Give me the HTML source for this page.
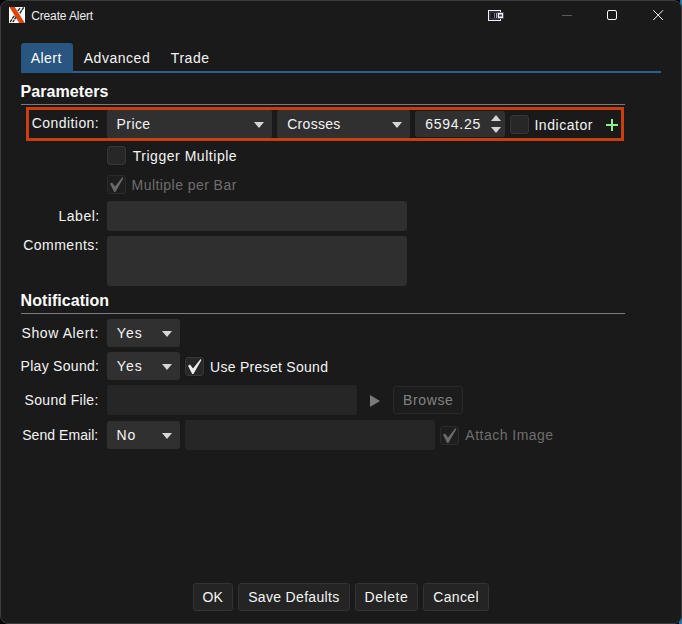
<!DOCTYPE html>
<html><head><meta charset="utf-8"><style>
html,body{margin:0;padding:0;width:682px;height:624px;overflow:hidden;background:#000;}
.b{position:absolute;box-sizing:content-box}
.t{position:absolute;white-space:nowrap;font-family:"Liberation Sans",sans-serif;line-height:1}
</style></head><body>
<div class="b" style="left:680px;top:0;width:2px;height:8px;background:#1677b3"></div><div class="b" style="left:679px;top:617px;width:3px;height:7px;background:#1677b3"></div><div class="b" style="left:0;top:0;width:680px;height:622px;background:#1a1a1a;border:1px solid #3c3c3c;border-radius:8px"></div><svg class="b" style="left:9px;top:7px" width="16" height="16" viewBox="0 0 16 16">
<rect x="0" y="0" width="16" height="16" fill="#ffffff"/>
<polygon points="0.4,0 5.8,0 15.8,16 10.2,16" fill="#e0440e"/>
<g stroke="#262626" stroke-width="1.4" stroke-linecap="butt">
<line x1="9.0" y1="4.0" x2="10.9" y2="1.0"/>
<line x1="10.9" y1="6.3" x2="12.7" y2="3.4"/><line x1="12.9" y1="3.0" x2="14.8" y2="0.4"/>
<line x1="1.1" y1="15.2" x2="2.9" y2="12.3"/><line x1="3.2" y1="11.7" x2="5.3" y2="8.8"/>
<line x1="3.8" y1="15.2" x2="5.3" y2="12.8"/><line x1="5.6" y1="12.3" x2="7.0" y2="10.2"/>
</g></svg><svg class="b" style="left:480px;top:0" width="202" height="32" viewBox="480 0 202 32">
<rect x="488.5" y="10.5" width="12" height="10" fill="none" stroke="#f2f2f2" stroke-width="1"/>
<rect x="490" y="12" width="9" height="7" fill="#181820" stroke="#505068" stroke-width="0.8"/>
<rect x="494" y="13" width="1" height="5" fill="#777"/><rect x="496" y="13" width="1" height="5" fill="#aaa"/>
<rect x="497.5" y="12.5" width="6" height="6" fill="#f2f2f2" stroke="#404050" stroke-width="0.8"/>
<rect x="499" y="14.5" width="3" height="2" fill="#404058"/>
<line x1="562" y1="15.5" x2="572" y2="15.5" stroke="#5a5a5a" stroke-width="1"/>
<rect x="607.5" y="10.5" width="9" height="9" rx="1.5" fill="none" stroke="#ffffff" stroke-width="1"/>
<path d="M653.3 10.3 L663 20 M663 10.3 L653.3 20" stroke="#ffffff" stroke-width="1"/>
</svg><div class="b" style="left:21px;top:71px;width:640px;height:2px;background:#2b6094;"></div><div class="b" style="left:21px;top:43px;width:52px;height:30px;background:#285680;border-radius:3px 3px 0 0"></div><div class="b" style="left:21px;top:104px;width:604px;height:1px;background:#7a7a7a;"></div><div class="b" style="left:21px;top:313px;width:604px;height:1px;background:#7a7a7a;"></div><div class="b" style="left:26px;top:107px;width:592px;height:28px;border:3px solid #cc3f0c"></div><div class="b" style="left:107px;top:110px;width:165px;height:28px;background:#303030;border-radius:2px"></div><div class="b" style="left:277px;top:110px;width:133px;height:28px;background:#303030;border-radius:2px"></div><div class="b" style="left:415px;top:111px;width:90px;height:26px;background:#303030;border-radius:3px"></div><svg class="b" style="left:254px;top:122px" width="10" height="6"><polygon points="0,0 10,0 5.0,6" fill="#d6d6d6"/></svg><svg class="b" style="left:392px;top:122px" width="10" height="6"><polygon points="0,0 10,0 5.0,6" fill="#d6d6d6"/></svg><svg class="b" style="left:491px;top:115px" width="10" height="6"><polygon points="0,6 10,6 5.0,0" fill="#d6d6d6"/></svg><svg class="b" style="left:491px;top:127px" width="10" height="6"><polygon points="0,0 10,0 5.0,6" fill="#d6d6d6"/></svg><div class="b" style="left:510px;top:115px;width:17px;height:17px;background:#272727;border:1px solid #383838;border-radius:3px;box-shadow:0 0 0 1px #171717"></div><div class="b" style="left:107px;top:146px;width:17px;height:17px;background:#272727;border:1px solid #383838;border-radius:3px;box-shadow:0 0 0 1px #171717"></div><div class="b" style="left:107px;top:175px;width:17px;height:17px;background:#1e1e1e;border:1px solid #2b2b2b;border-radius:3px"></div><svg class="b" style="left:107px;top:175px" width="19" height="19" viewBox="0 0 19 19"><polygon points="3.0,8.8 5.0,7.6 8.0,11.4 15.6,2.0 16.3,3.3 8.4,17.0 7.2,17.0" fill="#6a6a6a"/></svg><div class="b" style="left:185px;top:357px;width:17px;height:17px;background:#272727;border:1px solid #383838;border-radius:3px;box-shadow:0 0 0 1px #171717"></div><svg class="b" style="left:185px;top:357px" width="19" height="19" viewBox="0 0 19 19"><polygon points="3.0,8.8 5.0,7.6 8.0,11.4 15.6,2.0 16.3,3.3 8.4,17.0 7.2,17.0" fill="#eeeeee"/></svg><div class="b" style="left:440px;top:426px;width:17px;height:17px;background:#1e1e1e;border:1px solid #2b2b2b;border-radius:3px"></div><svg class="b" style="left:440px;top:426px" width="19" height="19" viewBox="0 0 19 19"><polygon points="3.0,8.8 5.0,7.6 8.0,11.4 15.6,2.0 16.3,3.3 8.4,17.0 7.2,17.0" fill="#6a6a6a"/></svg><div class="b" style="left:606px;top:124px;width:12px;height:2px;background:#90ee90;"></div><div class="b" style="left:611px;top:119px;width:2px;height:12px;background:#90ee90;"></div><div class="b" style="left:107px;top:201px;width:300px;height:30px;background:#2f2f2f;border-radius:3px"></div><div class="b" style="left:107px;top:236px;width:300px;height:50px;background:#2f2f2f;border-radius:3px"></div><div class="b" style="left:107px;top:319px;width:73px;height:28px;background:#303030;border-radius:3px"></div><svg class="b" style="left:162px;top:331px" width="10" height="6"><polygon points="0,0 10,0 5.0,6" fill="#d6d6d6"/></svg><div class="b" style="left:107px;top:352px;width:73px;height:28px;background:#303030;border-radius:3px"></div><svg class="b" style="left:162px;top:364px" width="10" height="6"><polygon points="0,0 10,0 5.0,6" fill="#d6d6d6"/></svg><div class="b" style="left:107px;top:385px;width:250px;height:30px;background:#262626;border-radius:3px"></div><svg class="b" style="left:370px;top:395px" width="10" height="12"><polygon points="0,0 10,6 0,12" fill="#7a7a7a"/></svg><div class="b" style="left:393px;top:386px;width:68px;height:26px;background:#1c1c1c;border:1px solid #292929;border-radius:3px"></div><div class="b" style="left:107px;top:421px;width:73px;height:28px;background:#303030;border-radius:3px"></div><svg class="b" style="left:162px;top:433px" width="10" height="6"><polygon points="0,0 10,0 5.0,6" fill="#d6d6d6"/></svg><div class="b" style="left:185px;top:420px;width:250px;height:30px;background:#262626;border-radius:3px"></div><div class="b" style="left:193px;top:583px;width:38px;height:26px;background:#242424;border:1px solid #333333;border-radius:3px"></div><div class="b" style="left:238px;top:583px;width:110px;height:26px;background:#242424;border:1px solid #333333;border-radius:3px"></div><div class="b" style="left:355px;top:583px;width:61px;height:26px;background:#242424;border:1px solid #333333;border-radius:3px"></div><div class="b" style="left:423px;top:583px;width:64px;height:26px;background:#242424;border:1px solid #333333;border-radius:3px"></div>
<div class="t" id="title" style="left:31.16px;top:10.04px;font-size:12px;font-weight:400;letter-spacing:-0.126px;color:#ececec">Create Alert</div>
<div class="t" id="tab1" style="left:30.70px;top:50.65px;font-size:14px;font-weight:400;letter-spacing:0.475px;color:#ffffff">Alert</div>
<div class="t" id="tab2" style="left:83.78px;top:50.65px;font-size:14px;font-weight:400;letter-spacing:0.520px;color:#f4f4f4">Advanced</div>
<div class="t" id="tab3" style="left:170.78px;top:50.65px;font-size:14px;font-weight:400;letter-spacing:0.580px;color:#f4f4f4">Trade</div>
<div class="t" id="hParams" style="left:20.60px;top:83.66px;font-size:16px;font-weight:700;letter-spacing:0.067px;color:#ffffff">Parameters</div>
<div class="t" id="cond" style="left:31.74px;top:115.65px;font-size:14px;font-weight:400;letter-spacing:0.440px;color:#f4f4f4">Condition:</div>
<div class="t" id="price" style="left:116.50px;top:116.65px;font-size:14px;font-weight:400;letter-spacing:0.440px;color:#f4f4f4">Price</div>
<div class="t" id="crosses" style="left:287.20px;top:116.65px;font-size:14px;font-weight:400;letter-spacing:0.300px;color:#f4f4f4">Crosses</div>
<div class="t" id="spin" style="left:425.28px;top:116.65px;font-size:14px;font-weight:400;letter-spacing:0.720px;color:#f4f4f4">6594.25</div>
<div class="t" id="indic" style="left:534.42px;top:117.65px;font-size:14px;font-weight:400;letter-spacing:0.545px;color:#f4f4f4">Indicator</div>
<div class="t" id="trig" style="left:132.70px;top:148.65px;font-size:14px;font-weight:400;letter-spacing:0.533px;color:#f4f4f4">Trigger Multiple</div>
<div class="t" id="mpb" style="left:131.54px;top:177.65px;font-size:14px;font-weight:400;letter-spacing:0.449px;color:#6e6e6e">Multiple per Bar</div>
<div class="t" id="label" style="left:58.54px;top:208.65px;font-size:14px;font-weight:400;letter-spacing:0.496px;color:#f4f4f4">Label:</div>
<div class="t" id="comm" style="left:23.16px;top:237.65px;font-size:14px;font-weight:400;letter-spacing:0.493px;color:#f4f4f4">Comments:</div>
<div class="t" id="hNotif" style="left:20.60px;top:292.66px;font-size:16px;font-weight:700;letter-spacing:0.045px;color:#ffffff">Notification</div>
<div class="t" id="show" style="left:21.54px;top:325.65px;font-size:14px;font-weight:400;letter-spacing:0.594px;color:#f4f4f4">Show Alert:</div>
<div class="t" id="yes1" style="left:116.70px;top:325.65px;font-size:14px;font-weight:400;letter-spacing:1.140px;color:#f4f4f4">Yes</div>
<div class="t" id="play" style="left:20.50px;top:358.65px;font-size:14px;font-weight:400;letter-spacing:0.300px;color:#f4f4f4">Play Sound:</div>
<div class="t" id="yes2" style="left:116.70px;top:358.65px;font-size:14px;font-weight:400;letter-spacing:1.140px;color:#f4f4f4">Yes</div>
<div class="t" id="preset" style="left:210.08px;top:359.65px;font-size:14px;font-weight:400;letter-spacing:0.281px;color:#f4f4f4">Use Preset Sound</div>
<div class="t" id="sfile" style="left:24.62px;top:392.65px;font-size:14px;font-weight:400;letter-spacing:0.286px;color:#f4f4f4">Sound File:</div>
<div class="t" id="browse" style="left:403.08px;top:392.65px;font-size:14px;font-weight:400;letter-spacing:0.608px;color:#828282">Browse</div>
<div class="t" id="email" style="left:22.16px;top:427.65px;font-size:14px;font-weight:400;letter-spacing:0.062px;color:#f4f4f4">Send Email:</div>
<div class="t" id="no" style="left:116.58px;top:427.65px;font-size:14px;font-weight:400;letter-spacing:0.720px;color:#f4f4f4">No</div>
<div class="t" id="attach" style="left:465.36px;top:428.15px;font-size:14px;font-weight:400;letter-spacing:0.478px;color:#6e6e6e">Attach Image</div>
<div class="t" id="ok" style="left:202.62px;top:589.65px;font-size:14px;font-weight:400;letter-spacing:-0.120px;color:#f4f4f4">OK</div>
<div class="t" id="save" style="left:248.20px;top:589.65px;font-size:14px;font-weight:400;letter-spacing:0.323px;color:#f4f4f4">Save Defaults</div>
<div class="t" id="del" style="left:364.50px;top:589.65px;font-size:14px;font-weight:400;letter-spacing:0.580px;color:#f4f4f4">Delete</div>
<div class="t" id="cancel" style="left:433.20px;top:589.65px;font-size:14px;font-weight:400;letter-spacing:0.356px;color:#f4f4f4">Cancel</div>
</body></html>
